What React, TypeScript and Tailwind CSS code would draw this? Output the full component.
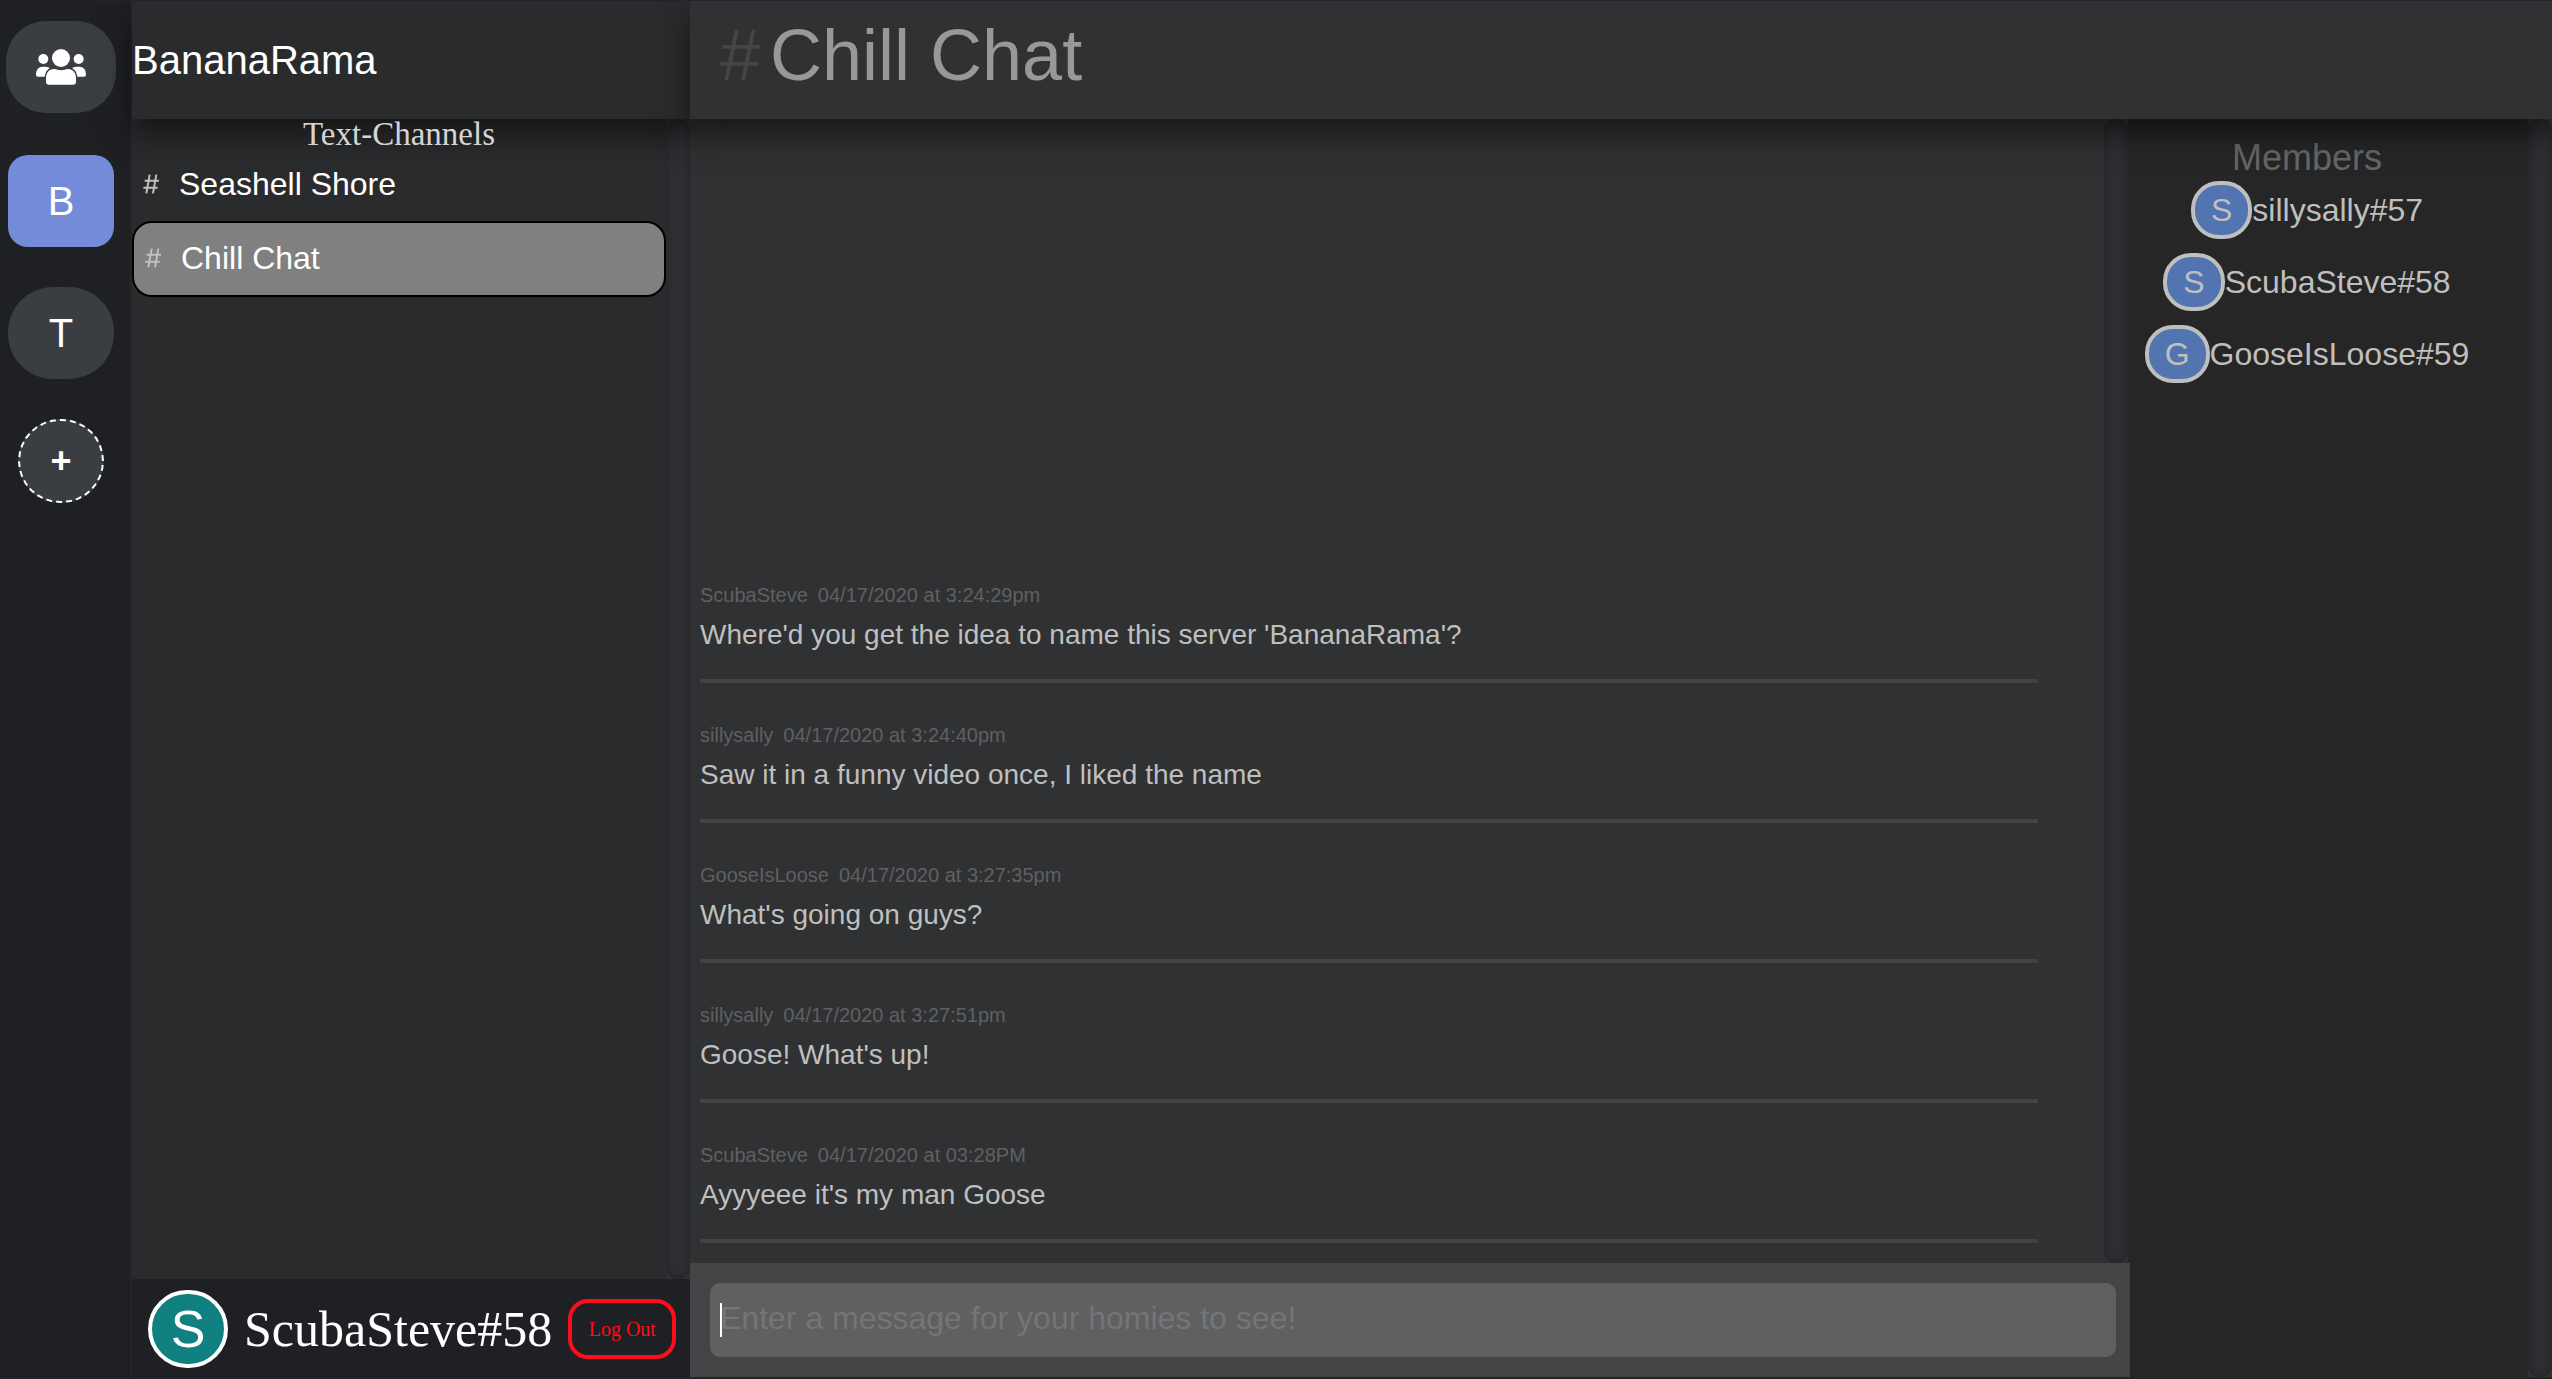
const channels = [
  { name: "Seashell Shore", active: false },
  { name: "Chill Chat", active: true },
];

const members = ["sillysally#57", "ScubaSteve#58", "GooseIsLoose#59"];

const messages = [
  { author: "ScubaSteve", time: "04/17/2020 at 3:24:29pm", text: "Where'd you get the idea to name this server 'BananaRama'?" },
  { author: "sillysally", time: "04/17/2020 at 3:24:40pm", text: "Saw it in a funny video once, I liked the name" },
  { author: "GooseIsLoose", time: "04/17/2020 at 3:27:35pm", text: "What's going on guys?" },
  { author: "sillysally", time: "04/17/2020 at 3:27:51pm", text: "Goose! What's up!" },
  { author: "ScubaSteve", time: "04/17/2020 at 03:28PM", text: "Ayyyeee it's my man Goose" },
];

function GroupIcon() {
  return (
    <svg viewBox="0 0 150 108" className="h-9 w-[50px]" fill="currentColor" aria-hidden="true">
      <ellipse cx="75" cy="27" rx="27" ry="27" />
      <circle cx="22" cy="30" r="15" />
      <circle cx="128" cy="30" r="15" />
      <path d="M0 77 C0 61 8 53 20 53 C31 53 37 54 42 57 C33 62 28 70 26 83 H6 Q0 83 0 77 Z" />
      <path d="M150 77 C150 61 142 53 130 53 C119 53 113 54 108 57 C117 62 122 70 124 83 H144 Q150 83 150 77 Z" />
      <path d="M30 98 V88 C30 71 39 60 54 60 C62 60 66 64 75 64 C84 64 88 60 96 60 C111 60 120 71 120 88 V98 Q120 107 111 107 H39 Q30 107 30 98 Z" />
    </svg>
  );
}

function ChannelIcon() {
  return (
    <svg viewBox="0 0 48 60" className="h-5 w-4 text-[#c0c0c0]" fill="none" stroke="currentColor" strokeWidth="6" aria-hidden="true">
      <path d="M20 2 L10 58 M40 2 L30 58 M5 20 H48 M1 41 H44" />
    </svg>
  );
}

function ScrollTrack() {
  return (
    <div className="w-6 shrink-0 bg-[#303133]">
      <div className="h-full rounded-xl bg-[#2e3033] shadow-[inset_0_0_12px_rgba(0,0,0,0.3)]" />
    </div>
  );
}

function ServerRail() {
  return (
    <nav aria-label="Servers" className="flex w-[132px] shrink-0 flex-col border-r-2 border-[#242527] bg-[#1f2024] pt-5">
      <div className="flex w-[122px] flex-col items-center gap-10">
        <button aria-label="Home" className="mb-[2px] flex h-[92px] w-[110px] items-center justify-center rounded-[40px] bg-[#3a3d42] text-white">
          <GroupIcon />
        </button>
        <button className="h-[92px] w-[106px] rounded-[20px] bg-[#738bd9] text-[40px] text-white">B</button>
        <button className="h-[92px] w-[106px] rounded-[45px] bg-[#3a3d42] text-[40px] text-white">T</button>
        <button aria-label="Add server" className="h-[84px] w-[86px] rounded-full border-2 border-dashed border-white bg-[#3a3d42] text-[36px] font-bold text-white">+</button>
      </div>
    </nav>
  );
}

function ChannelColumn() {
  return (
    <div className="flex w-[558px] shrink-0 flex-col bg-[#2a2b2d]">
      <header className="z-10 flex h-[118px] shrink-0 items-center bg-[#2a2b2d] shadow-[0_16px_28px_rgba(0,0,0,0.5)]">
        <h1 className="text-[40px] text-white">BananaRama</h1>
      </header>
      <div className="flex min-h-0 flex-1">
        <div className="flex-1">
          <h2 className="relative z-20 text-center font-['Liberation_Serif',serif] text-[33px] leading-[30px] text-[#d5d5d5]">Text-Channels</h2>
          <ul>
            {channels.map((c) => (
              <li key={c.name}>
                <button
                  className={
                    c.active
                      ? "flex h-[76px] w-full items-center gap-5 rounded-[20px] border-2 border-black bg-[#808080] pb-[2px] pl-[11px] text-[32px] text-white"
                      : "flex h-[72px] w-full items-center gap-5 pb-[2px] pl-[11px] text-[32px] text-white"
                  }
                >
                  <ChannelIcon />
                  {c.name}
                </button>
              </li>
            ))}
          </ul>
        </div>
        <ScrollTrack />
      </div>
      <footer className="flex h-[98px] shrink-0 items-center bg-[#1f2024] pt-[2px] pl-4 font-['Liberation_Serif',serif]">
        <div className="flex h-[78px] w-20 items-center justify-center rounded-full border-4 border-white bg-[#108080] font-['Liberation_Sans',sans-serif] text-[52px] text-white">S</div>
        <span className="ml-4 text-[50px] text-white">ScubaSteve#58</span>
        <button className="ml-4 h-[60px] w-[108px] rounded-[20px] border-4 border-[#fc0d1b] text-xl text-[#fc0d1b]">Log Out</button>
      </footer>
    </div>
  );
}

function Chat() {
  return (
    <main className="flex min-w-0 flex-1 flex-col bg-[#303133]">
      <div className="flex min-h-0 flex-1">
        <ol className="flex min-w-0 flex-1 flex-col justify-end pr-[66px] pb-5 pl-[10px]">
          {messages.map((m) => (
            <li key={m.time} className="flex h-[140px] flex-col justify-end border-b-4 border-[#424345] pb-7">
              <p className="text-xl leading-6 text-[#5f6062]">
                {m.author}
                <time className="ml-[10px]">{m.time}</time>
              </p>
              <p className="mt-3 text-[28px] leading-8 text-[#bfbfbf]">{m.text}</p>
            </li>
          ))}
        </ol>
        <ScrollTrack />
        <div className="w-[2px] bg-[#262626]" />
      </div>
      <form className="relative flex shrink-0 items-center bg-[#434446] py-5 pr-[14px] pl-5">
        <input
          aria-label="Message"
          placeholder="Enter a message for your homies to see!"
          className="h-[74px] w-full rounded-[10px] bg-[#5f6062] px-[10px] pb-1 text-[32px] text-white caret-white outline-none placeholder:text-[#757575]"
        />
        <span aria-hidden="true" className="absolute left-[30px] h-[34px] w-[2px] bg-white" />
      </form>
    </main>
  );
}

function Members() {
  return (
    <aside className="flex w-[422px] shrink-0 bg-[#262626]">
      <div className="flex flex-1 flex-col items-center pt-4 pr-11">
        <h2 className="text-[36px] leading-[46px] text-[#666]">Members</h2>
        <ul className="flex flex-col items-center gap-[14px]">
          {members.map((m) => (
            <li key={m} className="flex items-center text-[32px] leading-9 text-[#bfbfbf]">
              <span className="flex h-[58px] items-center rounded-[28px] border-4 border-[#bfbfbf] bg-[#5274b0] px-4 uppercase">{m[0]}</span>
              {m}
            </li>
          ))}
        </ul>
      </div>
      <ScrollTrack />
    </aside>
  );
}

export default function App() {
  return (
    <div className="flex h-screen overflow-hidden border-t border-b-2 border-[#242428] bg-[#262626] font-['Liberation_Sans',Arial,sans-serif]">
      <ServerRail />
      <ChannelColumn />
      <div className="flex min-w-0 flex-1 flex-col">
        <header className="z-10 flex h-[118px] shrink-0 bg-[#303133] pt-3 pl-[30px] text-[72px] leading-[84px] shadow-[0_16px_28px_rgba(0,0,0,0.5)]">
          <span className="text-[#444547]">#</span>
          <h2 className="ml-[10px] text-[#979899]">Chill Chat</h2>
        </header>
        <div className="flex min-h-0 flex-1">
          <Chat />
          <Members />
        </div>
      </div>
    </div>
  );
}
